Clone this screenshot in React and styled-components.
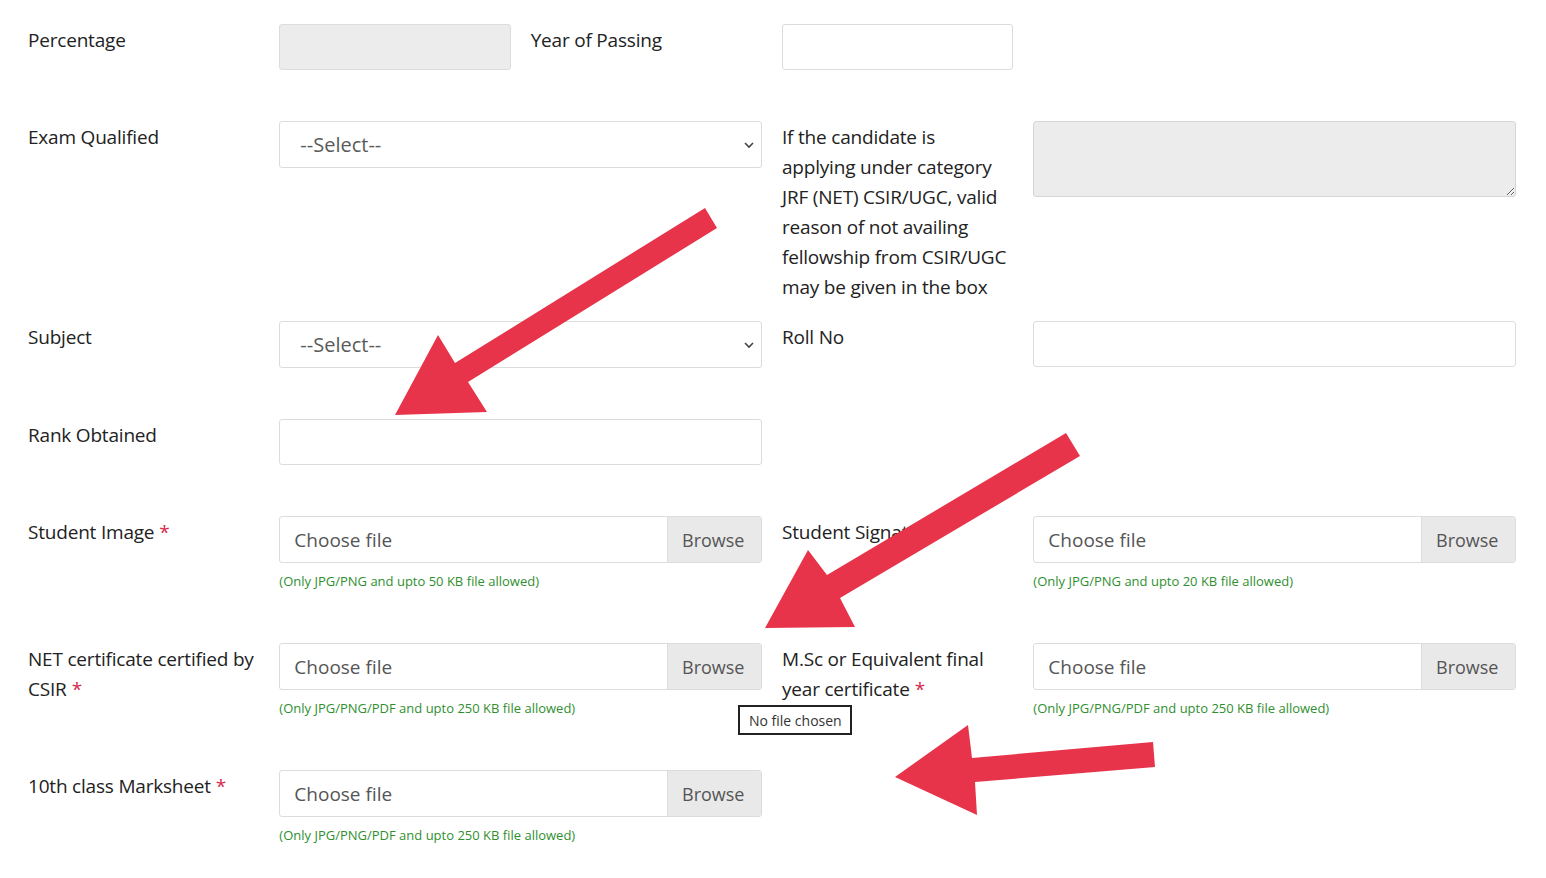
import React from 'react';
import styled, { createGlobalStyle } from 'styled-components';

const GlobalStyle = createGlobalStyle`
    body {
        margin: 0;
        background: #fff;
        font-family: "Open Sans", "Noto Sans", sans-serif;
        color: #222;
    }
`

const Page = styled.div`
    position: relative;
    width: 1546px;
    height: 878px;
    overflow: hidden;
    padding: 24px 30px 0 28px;
    box-sizing: border-box;
`

const Row = styled.div`
    display: grid;
    grid-template-columns: repeat(6, 1fr);
    column-gap: 20px;
    align-items: start;
    margin-bottom: ${props => props.$space || 51}px;
`

const Label = styled.label`
    display: block;
    padding-top: 1px;
    margin-right: -8px;
    font-size: 19px;
    line-height: 30px;
    letter-spacing: -0.2px;
    color: #222;
`

const Line = styled.span`
    display: block;
    white-space: nowrap;
`

const Star = styled.span`
    color: #d42a4c;
    margin-left: 5px;
`

const Field = styled.div`
    grid-column: ${props => props.$span ? `span ${props.$span}` : 'auto'};
    position: relative;
`

const TextInput = styled.input`
    display: block;
    width: 100%;
    height: 46px;
    box-sizing: border-box;
    border: 1px solid #dcdcdc;
    border-radius: 3px;
    background: ${props => props.disabled ? '#ececec' : '#fff'};
    font: inherit;
    font-size: 19px;
    padding: 0 15px;
    outline: none;
`

const TextArea = styled.textarea`
    display: block;
    width: 100%;
    height: 76px;
    box-sizing: border-box;
    border: 1px solid #d6d6d6;
    border-radius: 3px;
    background: #ececec;
    resize: vertical;
    outline: none;
`

const Select = styled.select`
    display: block;
    width: 100%;
    height: 47px;
    box-sizing: border-box;
    border: 1px solid #dcdcdc;
    border-radius: 3px;
    background: #fff url("data:image/svg+xml,%3Csvg xmlns='http://www.w3.org/2000/svg' width='12' height='8' viewBox='0 0 12 8'%3E%3Cpath d='M2 2l4 4 4-4' fill='none' stroke='%23444' stroke-width='1.6'/%3E%3C/svg%3E") no-repeat right 6px center;
    appearance: none;
    font-family: "Open Sans", "Noto Sans", sans-serif;
    font-size: 20px;
    color: #5a5a5a;
    padding: 0 20px;
    outline: none;
`

const FileBox = styled.div`
    display: flex;
    height: 47px;
    box-sizing: border-box;
    border: 1px solid #dcdcdc;
    border-radius: 3px;
    overflow: hidden;
    font-size: 19px;
    color: #555;
`

const FileName = styled.div`
    flex: 1;
    display: flex;
    align-items: center;
    padding-left: 14px;
`

const Browse = styled.div`
    display: flex;
    align-items: center;
    width: 94px;
    padding-left: 14px;
    box-sizing: border-box;
    font-size: 18px;
    background: #e9e9e9;
    border-left: 1px solid #dcdcdc;
`

const Hint = styled.div`
    margin-top: 8px;
    font-size: 13px;
    line-height: 21px;
    color: #2f8f2f;
`

const Tip = styled.div`
    position: absolute;
    left: 459px;
    top: 62px;
    width: 114px;
    height: 30px;
    box-sizing: border-box;
    border: 2px solid #222;
    background: #fff;
    font-size: 14px;
    display: flex;
    align-items: center;
    justify-content: center;
    color: #333;
    white-space: nowrap;
`

const Overlay = styled.svg`
    position: absolute;
    left: 0;
    top: 0;
    pointer-events: none;
`

const FileInput = ({ hint, tip }) => (
    <>
        <FileBox>
            <FileName>Choose file</FileName>
            <Browse>Browse</Browse>
        </FileBox>
        {hint && <Hint>{hint}</Hint>}
        {tip && <Tip>No file chosen</Tip>}
    </>
)

const noteLines = [
    'If the candidate is',
    'applying under category',
    'JRF (NET) CSIR/UGC, valid',
    'reason of not availing',
    'fellowship from CSIR/UGC',
    'may be given in the box',
]

const arrows = [
    '705,208 717,228 468,382 487,412 395,415 438,335 455,363',
    '1066,433 1080,456 840,598 855,627 765,628 808,550 827,575',
    '1153,742 1155,767 975,782 977,815 895,777 968,725 972,758',
]

export default function App() {
    return (
        <Page>
            <GlobalStyle />

            <Row>
                <Label>Percentage</Label>
                <Field><TextInput disabled /></Field>
                <Label>Year of Passing</Label>
                <Field><TextInput /></Field>
            </Row>

            <Row $space={19}>
                <Label>Exam Qualified</Label>
                <Field $span={2}>
                    <Select><option>--Select--</option></Select>
                </Field>
                <Label>
                    {noteLines.map(line => <Line key={line}>{line}</Line>)}
                </Label>
                <Field $span={2}><TextArea disabled /></Field>
            </Row>

            <Row>
                <Label>Subject</Label>
                <Field $span={2}>
                    <Select><option>--Select--</option></Select>
                </Field>
                <Label>Roll No</Label>
                <Field $span={2}><TextInput /></Field>
            </Row>

            <Row>
                <Label>Rank Obtained</Label>
                <Field $span={2}><TextInput /></Field>
            </Row>

            <Row>
                <Label>Student Image<Star>*</Star></Label>
                <Field $span={2}>
                    <FileInput hint="(Only JPG/PNG and upto 50 KB file allowed)" />
                </Field>
                <Label>Student Signature</Label>
                <Field $span={2}>
                    <FileInput hint="(Only JPG/PNG and upto 20 KB file allowed)" />
                </Field>
            </Row>

            <Row>
                <Label>NET certificate certified by CSIR<Star>*</Star></Label>
                <Field $span={2}>
                    <FileInput hint="(Only JPG/PNG/PDF and upto 250 KB file allowed)" tip />
                </Field>
                <Label>M.Sc or Equivalent final year certificate<Star>*</Star></Label>
                <Field $span={2}>
                    <FileInput hint="(Only JPG/PNG/PDF and upto 250 KB file allowed)" />
                </Field>
            </Row>

            <Row>
                <Label>10th class Marksheet<Star>*</Star></Label>
                <Field $span={2}>
                    <FileInput hint="(Only JPG/PNG/PDF and upto 250 KB file allowed)" />
                </Field>
            </Row>

            <Overlay width="1546" height="878" viewBox="0 0 1546 878">
                {arrows.map(points => (
                    <polygon key={points} points={points} fill="#e7344a" />
                ))}
            </Overlay>
        </Page>
    )
}
